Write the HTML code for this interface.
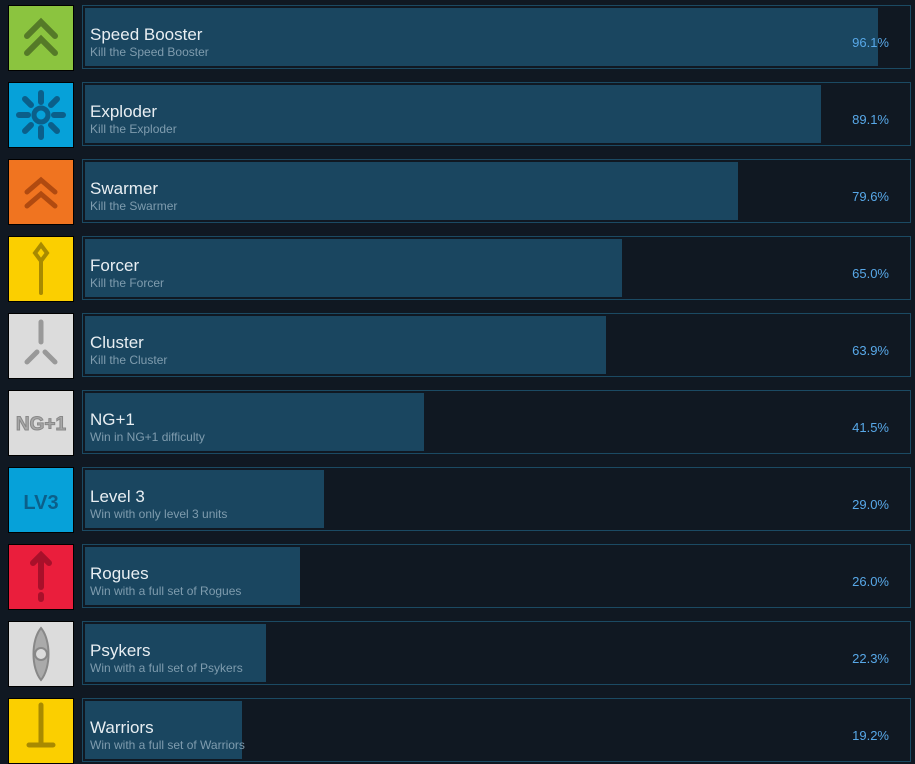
<!DOCTYPE html><html><head><style>
body{margin:0;background:#101822;width:915px;height:746px;overflow:hidden;position:relative;font-family:"Liberation Sans",Arial,sans-serif}
.ic{position:absolute;left:8px;width:64px;height:64px;border:1px solid #000}
.ic svg{display:block}
.box{position:absolute;left:82px;width:827px;height:62px;border:1px solid #1b4a63}
.fill{position:absolute;left:2px;top:2px;height:58px;background:#1a4660}
.t{position:absolute;left:7px;top:19px;color:#e8eef2;font-size:17px;white-space:nowrap}
.s{position:absolute;left:7px;top:39px;color:#7f9cae;font-size:12px;white-space:nowrap}
.p{position:absolute;right:21px;top:29px;color:#58a8e8;font-size:13px}
</style></head><body>
<div class="ic" style="top:5px;background:#8bc43f"><svg width="64" height="64"><g stroke="#557a28" stroke-width="6" stroke-linecap="round" fill="none"><path d="M18 30L32 16L46 30"/><path d="M18 47L32 33L46 47"/></g></svg></div>
<div class="box" style="top:5px"><div class="fill" style="width:793px"></div><div class="t">Speed Booster</div><div class="s">Kill the Speed Booster</div><div class="p">96.1%</div></div>

<div class="ic" style="top:82px;background:#06a1d9"><svg width="64" height="64"><g stroke="#0b5f8a" stroke-width="6" stroke-linecap="round"><path d="M32 10v9M32 45v9M10 32h9M45 32h9M16 16l6 6M42 42l6 6M16 48l6-6M42 22l6-6"/></g><circle cx="32" cy="32" r="7" fill="none" stroke="#0b5f8a" stroke-width="5"/></svg></div>
<div class="box" style="top:82px"><div class="fill" style="width:736px"></div><div class="t">Exploder</div><div class="s">Kill the Exploder</div><div class="p">89.1%</div></div>

<div class="ic" style="top:159px;background:#f07420"><svg width="64" height="64"><g stroke="#b04a10" stroke-width="5" stroke-linecap="round" fill="none"><path d="M18 32L32 20L46 32"/><path d="M18 46L32 34L46 46"/></g></svg></div>
<div class="box" style="top:159px"><div class="fill" style="width:653px"></div><div class="t">Swarmer</div><div class="s">Kill the Swarmer</div><div class="p">79.6%</div></div>

<div class="ic" style="top:236px;background:#fbcf00"><svg width="64" height="64"><g stroke="#a88a00" stroke-width="4" fill="none" stroke-linecap="round"><path d="M32 8L38 16L32 24L26 16Z"/><path d="M32 24v32"/></g></svg></div>
<div class="box" style="top:236px"><div class="fill" style="width:537px"></div><div class="t">Forcer</div><div class="s">Kill the Forcer</div><div class="p">65.0%</div></div>

<div class="ic" style="top:313px;background:#dcdcdc"><svg width="64" height="64"><g stroke="#999" stroke-width="5" stroke-linecap="round"><path d="M32 8v20M28 38L18 48M36 38L46 48"/></g></svg></div>
<div class="box" style="top:313px"><div class="fill" style="width:521px"></div><div class="t">Cluster</div><div class="s">Kill the Cluster</div><div class="p">63.9%</div></div>

<div class="ic" style="top:390px;background:#dcdcdc"><svg width="64" height="64"><text x="32" y="39" text-anchor="middle" font-family="Liberation Sans" font-weight="bold" font-size="19" fill="#a8a8a8" stroke="#888" stroke-width="1">NG+1</text></svg></div>
<div class="box" style="top:390px"><div class="fill" style="width:339px"></div><div class="t">NG+1</div><div class="s">Win in NG+1 difficulty</div><div class="p">41.5%</div></div>

<div class="ic" style="top:467px;background:#06a1d9"><svg width="64" height="64"><text x="32" y="41" text-anchor="middle" font-family="Liberation Sans" font-weight="bold" font-size="20" fill="#0b5f8a">LV3</text></svg></div>
<div class="box" style="top:467px"><div class="fill" style="width:239px"></div><div class="t">Level 3</div><div class="s">Win with only level 3 units</div><div class="p">29.0%</div></div>

<div class="ic" style="top:544px;background:#ea1e3c"><svg width="64" height="64"><g stroke="#a8102a" stroke-width="6" stroke-linecap="round" fill="none"><path d="M24 18L32 10L40 18"/><path d="M32 12v30"/><path d="M32 50v4"/></g></svg></div>
<div class="box" style="top:544px"><div class="fill" style="width:215px"></div><div class="t">Rogues</div><div class="s">Win with a full set of Rogues</div><div class="p">26.0%</div></div>

<div class="ic" style="top:621px;background:#dcdcdc"><svg width="64" height="64"><path d="M32 6C22 18 22 46 32 58C42 46 42 18 32 6Z" fill="#aaa" stroke="#888" stroke-width="2"/><circle cx="32" cy="32" r="6" fill="#dcdcdc" stroke="#888" stroke-width="2"/></svg></div>
<div class="box" style="top:621px"><div class="fill" style="width:181px"></div><div class="t">Psykers</div><div class="s">Win with a full set of Psykers</div><div class="p">22.3%</div></div>

<div class="ic" style="top:698px;background:#fbcf00"><svg width="64" height="64"><g stroke="#a88a00" stroke-width="5" stroke-linecap="round"><path d="M32 6v40M20 46h24"/></g></svg></div>
<div class="box" style="top:698px"><div class="fill" style="width:157px"></div><div class="t">Warriors</div><div class="s">Win with a full set of Warriors</div><div class="p">19.2%</div></div>
</body></html>
